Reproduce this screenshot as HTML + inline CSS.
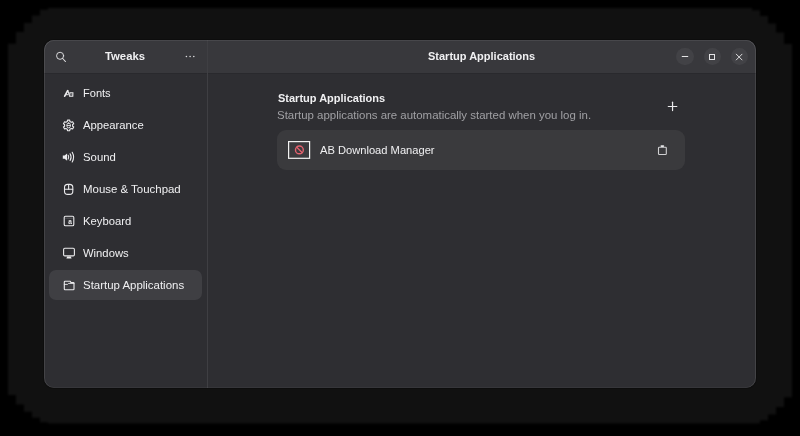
<!DOCTYPE html>
<html><head><meta charset="utf-8">
<style>
html,body{-webkit-font-smoothing:antialiased;margin:0;padding:0;width:800px;height:436px;overflow:hidden;background:#000;font-family:"Liberation Sans",sans-serif;}
.shadow{position:absolute;left:8px;top:8px;width:784px;height:415.6px;background:#111111;clip-path:polygon(0.0px 45.0px,0.0px 35.7px,8.0px 35.7px,8.0px 24.0px,16.0px 24.0px,16.0px 14.9px,24.0px 14.9px,24.0px 7.4px,32.0px 7.4px,32.0px 1.7px,40.0px 1.7px,40.0px 0.0px,743.0px 0.0px,743.0px 0.1px,744.0px 0.1px,744.0px 2.3px,752.0px 2.3px,752.0px 8.0px,760.0px 8.0px,760.0px 15.4px,768.0px 15.4px,768.0px 24.4px,776.0px 24.4px,776.0px 35.9px,784.0px 35.9px,784.0px 45.0px,784.0px 381.6px,784.0px 389.3px,776.0px 389.3px,776.0px 399.1px,768.0px 399.1px,768.0px 406.5px,760.0px 406.5px,760.0px 412.3px,752.0px 412.3px,752.0px 415.2px,749.0px 415.2px,749.0px 415.6px,40.0px 415.6px,40.0px 414.2px,32.0px 414.2px,32.0px 409.7px,24.0px 409.7px,24.0px 403.7px,16.0px 403.7px,16.0px 396.4px,8.0px 396.4px,8.0px 387.0px,0.0px 387.0px,0.0px 379.6px);}
.win{position:absolute;left:44px;top:39.5px;width:712px;height:348.5px;background:#2e2e32;border-radius:10px;overflow:hidden;box-shadow:0 0 0 1px rgba(0,0,0,0.2);}
.winhl{position:absolute;left:44px;top:39.5px;width:712px;height:348.5px;border-radius:10px;box-shadow:inset 1px 0 0 rgba(255,255,255,0.1),inset -1px 0 0 rgba(255,255,255,0.1),inset 0 1px 0 rgba(255,255,255,0.08),inset 0 -1px 0 rgba(255,255,255,0.04);pointer-events:none;}
.hb{position:absolute;left:0;top:0;width:712px;height:33.9px;background:#38383c;box-shadow:0 1px rgba(0,0,6,0.1);}
.sep{position:absolute;left:163px;top:0;width:1px;height:349px;background:#3f3f43;}
.t{position:absolute;will-change:transform;white-space:nowrap;color:#f0f0f2;font-size:11px;line-height:14px;}
.b{font-weight:700;}
.dim{color:#a0a0a4;}
.sel{position:absolute;left:5.1px;top:230.1px;width:152.9px;height:30.3px;background:#3f3f43;border-radius:7px;}
.card{position:absolute;left:232.7px;top:90.9px;width:408.8px;height:39.4px;background:#3a3a3d;border-radius:9px;}
.btn{position:absolute;width:17.6px;height:17.6px;border-radius:50%;background:#424246;}
svg{position:absolute;overflow:visible;}
</style></head><body>
<div style="position:absolute;left:0;top:0;width:800px;height:436px;filter:blur(0.9px);"><div class="shadow"></div></div>
<div class="win">
  <div class="hb"></div>
  <div class="sep"></div>
  <div class="sel"></div>
  <div class="card"></div>
  <!-- header texts -->
  <div class="t b" style="left:61px;top:9.5px;font-size:11.3px;">Tweaks</div>
  <div class="t b" style="left:384px;top:9.5px;">Startup Applications</div>
  <!-- sidebar -->
  <div class="t" style="left:39.3px;top:46.3px;font-size:11.05px;">Fonts</div>
  <div class="t" style="left:39.3px;top:78.3px;font-size:11.25px;">Appearance</div>
  <div class="t" style="left:39.3px;top:110.3px;font-size:11.35px;">Sound</div>
  <div class="t" style="left:39.3px;top:142.3px;font-size:11.45px;">Mouse &amp; Touchpad</div>
  <div class="t" style="left:39.3px;top:174.3px;font-size:11.25px;">Keyboard</div>
  <div class="t" style="left:39.3px;top:206.3px;font-size:11.25px;">Windows</div>
  <div class="t" style="left:39.3px;top:238.3px;font-size:11.45px;">Startup Applications</div>
  <!-- content -->
  <div class="t b" style="left:234px;top:51.5px;">Startup Applications</div>
  <div class="t dim" style="left:233.3px;top:68.3px;font-size:11.45px;">Startup applications are automatically started when you log in.</div>
  <div class="t" style="left:275.5px;top:103.3px;font-size:11.15px;">AB Download Manager</div>
  <div class="btn" style="left:632.4px;top:8.2px;"></div>
  <div class="btn" style="left:659.7px;top:8.2px;"></div>
  <div class="btn" style="left:686.7px;top:8.2px;"></div>
</div>
<div class="winhl"></div>
<svg width="800" height="436" viewBox="0 0 800 436" style="left:0;top:0;" fill="none" stroke="#ebebed" stroke-width="1.1" stroke-linecap="round" stroke-linejoin="round">
  <!-- search -->
  <circle cx="60.1" cy="55.8" r="3.55" stroke-width="0.95" stroke="#e2e2e4"/>
  <line x1="62.7" y1="58.5" x2="65.4" y2="61.5" stroke-width="1.1" stroke="#e2e2e4"/>
  <!-- dots -->
  <g fill="#dcdcde" stroke="none"><circle cx="186.4" cy="56.5" r="0.8"/><circle cx="190.1" cy="56.5" r="0.8"/><circle cx="193.8" cy="56.5" r="0.8"/></g>
  <!-- Aa -->
  <line x1="64.7" y1="96.2" x2="67.7" y2="90.7" stroke-width="1.7"/>
  <line x1="67.8" y1="90.8" x2="68.7" y2="93.4" stroke-width="1.2"/>
  <line x1="66.2" y1="94.7" x2="68.5" y2="94.7" stroke-width="1"/>
  <path d="M69.9 92.7 L72.9 92.7 L72.8 96.2 L69.6 96.2 Z" stroke-width="1.1" stroke-linejoin="miter"/>
  <line x1="70.9" y1="95.5" x2="71.9" y2="93.5" stroke-width="0.6" stroke="#9a9a9e"/>
  <!-- gear -->
  <path d="M67.48 120.12 L69.72 120.12 L69.87 121.50 L71.34 122.35 L72.61 121.79 L73.74 123.73 L72.61 124.55 L72.61 126.25 L73.74 127.07 L72.61 129.01 L71.34 128.45 L69.87 129.30 L69.72 130.68 L67.48 130.68 L67.33 129.30 L65.86 128.45 L64.59 129.01 L63.46 127.07 L64.59 126.25 L64.59 124.55 L63.46 123.73 L64.59 121.79 L65.86 122.35 L67.33 121.50 Z"/>
  <rect x="67" y="123.1" width="3.3" height="4.7" rx="1.5" stroke-width="0.95"/>
  <line x1="67.1" y1="125.5" x2="70.2" y2="125.5" stroke-width="0.85"/>
  <!-- sound -->
  <path fill="#ebebed" stroke="none" d="M62.8 155.6 L64.6 155.6 L67.1 153.6 L67.1 160.7 L64.6 158.7 L62.8 158.7 Z"/>
  <path d="M68.2 155.3 Q69.3 157.15 68.2 159"/>
  <path d="M70.1 153.8 Q72.1 157.15 70.1 160.5"/>
  <path d="M72.2 152.3 Q75 157.15 72.2 162"/>
  <!-- mouse -->
  <rect x="64.5" y="184.4" width="8.3" height="10" rx="3.2"/>
  <line x1="68.65" y1="184.6" x2="68.65" y2="189.3"/>
  <line x1="64.6" y1="189.3" x2="72.7" y2="189.3"/>
  <!-- keyboard -->
  <rect x="64.2" y="216.3" width="9.6" height="9.4" rx="1.3"/>
  <line x1="65.5" y1="218.2" x2="72.5" y2="218.2" stroke-width="0.5" stroke="#88888c"/>
  <text x="68.2" y="224.3" font-size="6.6" font-weight="700" font-family="Liberation Sans" fill="#ebebed" stroke="none">a</text>
  <!-- monitor -->
  <rect x="63.6" y="248.3" width="10.8" height="7.6" rx="1.2"/>
  <path fill="#ebebed" stroke="none" d="M67.2 256.6 L70.8 256.6 L71.6 258.6 L66.4 258.6 Z"/>
  <!-- folder -->
  <path d="M64.3 282 Q64.3 281.3 65 281.3 L70.2 281.3 L71 282.6 L73.3 282.6 Q74 282.6 74 283.3 L74 289.1 Q74 289.8 73.3 289.8 L65 289.8 Q64.3 289.8 64.3 289.1 Z"/>
  <path d="M64.3 284.4 L67.6 284.4 L68.6 283.4 L74 283.4" stroke-width="0.9"/>
  <!-- plus -->
  <line x1="668.3" y1="106.5" x2="676.8" y2="106.5" stroke-width="1.2"/>
  <line x1="672.55" y1="102.2" x2="672.55" y2="110.6" stroke-width="1.2"/>
  <!-- trash -->
  <rect x="658.5" y="147.2" width="7.8" height="7.3" rx="0.8" stroke="#d0d0d2"/>
  <rect x="660.5" y="145.3" width="3.7" height="1.6" rx="0.8" fill="#e8e8ea" stroke="none"/>
  <!-- window controls -->
  <g stroke="#e4e4e6" stroke-width="0.95" stroke-linecap="butt" stroke-linejoin="miter">
  <line x1="681.8" y1="56.5" x2="688.2" y2="56.5" stroke-width="1"/>
  <rect x="709.5" y="54.5" width="5" height="5" stroke-width="1"/>
  <line x1="736" y1="53.9" x2="742.3" y2="60.2"/>
  <line x1="742.3" y1="53.9" x2="736" y2="60.2"/>
  </g>
  <!-- app icon -->
  <rect x="288.6" y="141.6" width="21" height="16.7" stroke="#f2f2f2" stroke-width="1.2" stroke-linecap="butt" stroke-linejoin="miter"/>
  <circle cx="299.4" cy="149.9" r="3.9" stroke="#e4626f" stroke-width="1.4"/>
  <line x1="296.8" y1="147.3" x2="302" y2="152.5" stroke="#e4626f" stroke-width="1.3"/>
</svg>
</body></html>
